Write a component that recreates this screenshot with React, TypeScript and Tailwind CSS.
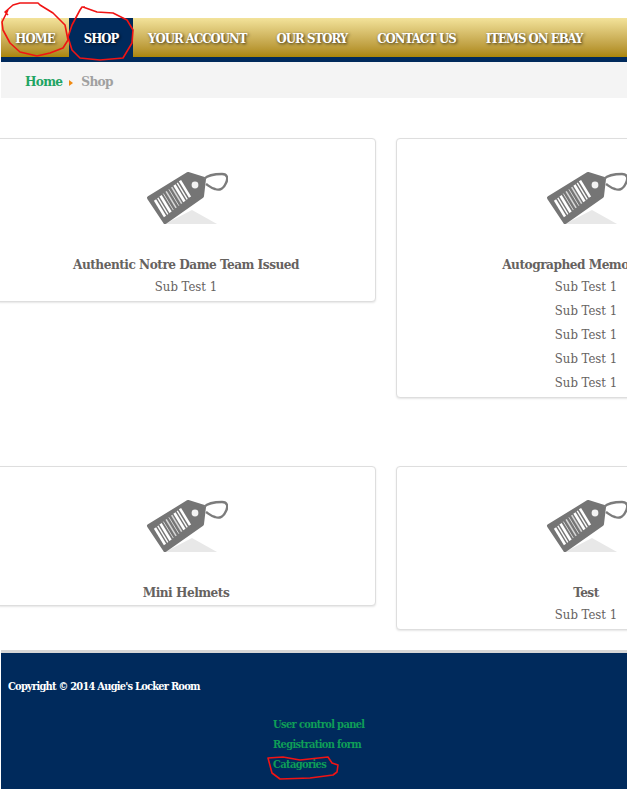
const serif = "font-['DejaVu_Serif_Condensed','DejaVu_Serif',serif]";

function Tag() {
  const n = 10;
  const widths = [2.6, 1.4, 2.6, 1, 1.6, 1, 1.6, 2.6, 1.4, 2.6];
  return (
    <svg width="84" height="60" viewBox="0 0 84 60" className="block">
      <path d="M21 58 L48 44 L73 58 Z" fill="#e8e8e8" />
      <path d="M5 32 L44 8 L60 13 L58 30 L21 56 Z" fill="#757575" stroke="#757575" strokeWidth="4" strokeLinejoin="round" />
      {widths.map((w, i) => {
        const x = 11 + ((36 - 11) * i) / (n - 1);
        const y = 34 + ((14.7 - 34) * i) / (n - 1);
        return <line key={i} x1={x} y1={y} x2={x + 10} y2={y + 16.5} stroke="#fff" strokeWidth={w} opacity={i > 2 && i < 7 ? 0.7 : 1} />;
      })}
      <circle cx="51" cy="19" r="3.4" fill="#f2f2f2" />
      <path d="M60 13 C64 9 72 8 78 8 C84 8 84 13 82 17 C80 22 76 25 71 23 C67 22 65 20 62 18" fill="none" stroke="#7c7c7c" strokeWidth="2.4" />
    </svg>
  );
}

function Card({ title, subs, h }: { title: string; subs: number; h: string }) {
  return (
    <div className={`w-[380px] shrink-0 ${h} bg-white border border-[#dedede] rounded shadow-[0_1px_2px_rgba(0,0,0,0.1)] flex flex-col items-center pt-[27px]`}>
      <Tag />
      <div className={`mt-[28px] mb-px text-[13.5px] leading-5 font-bold text-[#66625f] whitespace-nowrap tracking-[-0.5px] ${serif}`}>{title}</div>
      <div className="flex flex-col items-center">
        {Array.from({ length: subs }).map((_, i) => (
          <div key={i} className={`h-6 leading-[24px] text-[13px] text-[#66625f] ${serif}`}>Sub Test 1</div>
        ))}
      </div>
    </div>
  );
}

const navItem = `text-[13px] font-bold text-white tracking-[-0.95px] [text-shadow:1px_1px_3px_rgba(0,0,0,0.75)] whitespace-nowrap ${serif}`;

export default function App() {
  return (
    <div className="relative w-[627px] h-[789px] overflow-hidden bg-white">
      <div className="h-[18px]" />
      <nav className="ml-px h-[44px] border-b-[5px] border-[#002a5c] bg-gradient-to-b from-[#f3e39a] to-[#ab8604] flex items-stretch">
        <div className={`w-[68px] shrink-0 flex items-center justify-center pt-[2px] ${navItem}`}>HOME</div>
        <div className={`w-[64px] shrink-0 bg-[#002a5c] flex items-center justify-center pt-[2px] ${navItem}`}>SHOP</div>
        <div className="flex items-center pl-[15px] pt-[2px] gap-[30px]">
          <span className={navItem}>YOUR ACCOUNT</span>
          <span className={navItem}>OUR STORY</span>
          <span className={navItem}>CONTACT US</span>
          <span className={navItem}>ITEMS ON EBAY</span>
        </div>
      </nav>
      <div className="ml-px h-9 bg-[#f4f4f4] flex items-center pl-6 pt-[2px]">
        <span className={`text-[13.5px] text-[#1fa463] font-bold tracking-[-0.7px] ${serif}`}>Home</span>
        <span className="ml-[7px] mt-[3px] w-0 h-0 border-y-[3px] border-y-transparent border-l-[4px] border-l-[#f08a12]" />
        <span className={`ml-2 text-[13.5px] font-bold text-[#a0a0a0] tracking-[-0.7px] ${serif}`}>Shop</span>
      </div>
      <div className="ml-[-4px] mt-10 flex gap-5 items-start">
        <Card title="Authentic Notre Dame Team Issued" subs={1} h="h-[164px]" />
        <Card title="Autographed Memorabilia" subs={5} h="h-[260px]" />
      </div>
      <div className="ml-[-4px] mt-[68px] flex gap-5 items-start">
        <Card title="Mini Helmets" subs={0} h="h-[140px]" />
        <Card title="Test" subs={1} h="h-[164px]" />
      </div>
      <footer className="ml-px mt-5 h-[139px] border-t-[3px] border-[#d6d6d6] bg-[#002a5c] relative">
        <div className={`pl-[7px] pt-[27px] text-[11px] leading-[14px] text-white font-bold tracking-[-0.78px] ${serif}`}>Copyright © 2014 Augie's Locker Room</div>
        <ul className={`ml-[272px] mt-[21px] text-[11px] leading-5 font-bold text-[#0f9d58] tracking-[-0.65px] ${serif}`}>
          <li>User control panel</li>
          <li>Registration form</li>
          <li>Catagories</li>
        </ul>
      </footer>
      <svg className="absolute left-0 top-0 pointer-events-none" width="627" height="789" fill="none" stroke="#f01414" strokeWidth="1.6" strokeLinejoin="round">
        <path d="M8 15 L5 12 L13 5 L20 3 L38 3 L40 5 L53 13 L65 25 L68 40 L63 48 L50 53 L37 56 L20 52 L10 43 L3 30 L2 22 L8 10" />
        <path d="M85 7 L82 7 L80 10 L72 25 L68 37 L72 50 L80 58 L100 60 L123 58 L132 43 L133 30 L127 20 L113 13 L97 12 L83 7" />
        <path d="M268 758 L283 757 L300 760 L328 757 L332 763 L338 765 L337 772 L333 775 L310 778 L280 779 L272 773 Z" />
      </svg>
    </div>
  );
}
